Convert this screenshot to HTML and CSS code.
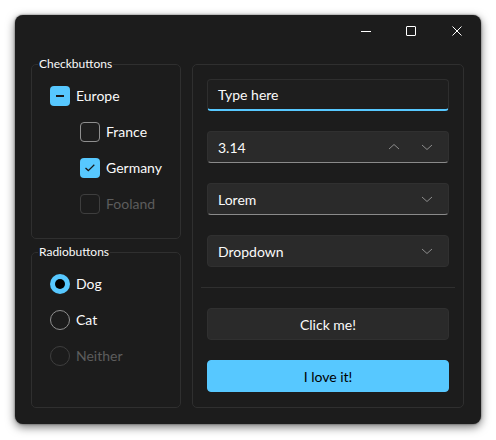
FILE: index.html
```html
<!DOCTYPE html>
<html>
<head>
<meta charset="utf-8">
<link rel="stylesheet" href="styles.css">
</head>
<body>
<div class="window">
  <div class="titlebar">
    <div class="tb-btn"><span class="ic-min"></span></div>
    <div class="tb-btn"><span class="ic-max"></span></div>
    <div class="tb-btn">
      <svg width="10" height="10" viewBox="0 0 10 10"><path d="M0.5 0.5L9.5 9.5M9.5 0.5L0.5 9.5" stroke="#fff" stroke-width="1"/></svg>
    </div>
  </div>
  <div class="content">
    <div class="left">
      <fieldset class="frame checks">
        <legend>Checkbuttons</legend>
        <div class="row">
          <span class="box on"><span class="dash"></span></span><span class="lbl">Europe</span>
        </div>
        <div class="row indent">
          <span class="box"></span><span class="lbl">France</span>
        </div>
        <div class="row indent">
          <span class="box on">
            <svg width="20" height="20" viewBox="0 0 20 20"><path d="M5.5 10L8.3 12.6L14.3 6.8" fill="none" stroke="#1a1a1a" stroke-width="1.3"/></svg>
          </span><span class="lbl">Germany</span>
        </div>
        <div class="row indent">
          <span class="box off"></span><span class="lbl dis">Fooland</span>
        </div>
      </fieldset>
      <fieldset class="frame radios">
        <legend>Radiobuttons</legend>
        <div class="row">
          <span class="radio on"><span class="dot"></span></span><span class="lbl">Dog</span>
        </div>
        <div class="row">
          <span class="radio"></span><span class="lbl">Cat</span>
        </div>
        <div class="row">
          <span class="radio off"></span><span class="lbl dis">Neither</span>
        </div>
      </fieldset>
    </div>
    <div class="panel">
      <div class="entry">Type here</div>
      <div class="field underline">
        <span class="val">3.14</span>
        <span class="arrows">
          <svg width="12" height="8" viewBox="0 0 12 8"><path d="M1 6L6 1.5L11 6" fill="none" stroke="#8c8c8c" stroke-width="1"/></svg>
          <svg width="12" height="8" viewBox="0 0 12 8"><path d="M1 2L6 6.5L11 2" fill="none" stroke="#8c8c8c" stroke-width="1"/></svg>
        </span>
      </div>
      <div class="field underline">
        <span class="val">Lorem</span>
        <svg class="chev" width="12" height="8" viewBox="0 0 12 8"><path d="M1 2L6 6.5L11 2" fill="none" stroke="#8c8c8c" stroke-width="1"/></svg>
      </div>
      <div class="field">
        <span class="val">Dropdown</span>
        <svg class="chev" width="12" height="8" viewBox="0 0 12 8"><path d="M1 2L6 6.5L11 2" fill="none" stroke="#8c8c8c" stroke-width="1"/></svg>
      </div>
      <div class="sep"></div>
      <div class="btn">Click me!</div>
      <div class="btn accent">I love it!</div>
    </div>
  </div>
</div>
</body>
</html>
```

FILE: styles.css
```css
* { box-sizing: border-box; }
html, body { margin: 0; padding: 0; background: #ffffff; }
body {
  width: 496px;
  height: 440px;
  padding: 15px 0 0 15px;
  font-family: Lato, "Noto Sans", sans-serif;
  color: #fafafa;
  font-size: 14px;
}
.window {
  width: 466px;
  height: 409px;
  background: #1c1c1c;
  border-radius: 8px;
  box-shadow: 0 3px 10px rgba(0,0,0,0.55), 0 0 2px rgba(0,0,0,0.6);
  display: flex;
  flex-direction: column;
}
.titlebar {
  height: 32px;
  display: flex;
  justify-content: flex-end;
  padding-right: 1px;
}
.tb-btn {
  width: 46px;
  height: 32px;
  display: flex;
  align-items: center;
  justify-content: center;
}
.ic-min { width: 10px; height: 1px; background: #fff; margin-left: 2px; }
.ic-max { width: 10px; height: 10px; border: 1px solid #fff; border-radius: 1px; }
.content {
  flex: 1;
  display: grid;
  grid-template-columns: 150px 272px;
  column-gap: 11px;
  padding: 10px 17px 16px 16px;
}
.left {
  display: flex;
  flex-direction: column;
  gap: 6px;
}
.frame {
  margin: 0;
  padding: 15px 0 0 0;
  border: 1px solid #2f2f2f;
  border-radius: 5px;
  min-width: 0;
  display: flex;
  flex-direction: column;
  gap: 16px;
}
.frame legend {
  font-size: 12px;
  line-height: 14px;
  padding: 0 1px;
  margin-left: 6px;
  color: #fafafa;
}
.checks { padding-bottom: 24px; }
.radios { flex: 1; }
.row {
  height: 20px;
  display: flex;
  align-items: center;
  margin-left: 18px;
}
.indent { padding-left: 30px; }
.lbl { margin-left: 6px; line-height: 20px; }
.lbl.dis { color: #5d5d5d; }
.box {
  width: 20px;
  height: 20px;
  border-radius: 4px;
  border: 1px solid #8f8f8f;
  background: #1e1e1e;
  display: flex;
  align-items: center;
  justify-content: center;
  flex: none;
}
.box.on { background: #57c8ff; border: none; }
.box.off { border-color: #3e3e3e; background: transparent; }
.dash { width: 8px; height: 2px; background: #1a1a1a; }
.radio {
  width: 20px;
  height: 20px;
  border-radius: 50%;
  border: 1px solid #8f8f8f;
  flex: none;
  display: flex;
  align-items: center;
  justify-content: center;
}
.radio.on { background: #57c8ff; border: none; }
.radio.off { border-color: #3e3e3e; }
.dot { width: 10px; height: 10px; border-radius: 50%; background: #000; }
.panel {
  margin-top: 7px;
  border: 1px solid #2f2f2f;
  border-radius: 5px;
  padding: 14px 14px 15px;
  display: flex;
  flex-direction: column;
  gap: 20px;
}
.entry {
  height: 32px;
  border: 1px solid #2e2e2e;
  border-bottom: 2px solid #57c8ff;
  border-radius: 4px;
  background: #1e1e1e;
  padding: 0 10px;
  line-height: 30px;
}
.field {
  height: 32px;
  border: 1px solid #303030;
  border-radius: 4px;
  background: #2a2a2a;
  padding: 0 15px 0 10px;
  display: flex;
  align-items: center;
  justify-content: space-between;
}
.field.underline { border-bottom: 1px solid #8a8a8a; }
.arrows {
  display: flex;
  gap: 21px;
}
.chev { display: block; }
.sep {
  height: 1px;
  background: #2f2f2f;
  margin: 0 -6px;
}
.btn {
  height: 32px;
  border: 1px solid #303030;
  border-radius: 4px;
  background: #2a2a2a;
  display: flex;
  align-items: center;
  justify-content: center;
}
.btn.accent {
  background: #57c8ff;
  border-color: #57c8ff;
  color: #000;
}
```
